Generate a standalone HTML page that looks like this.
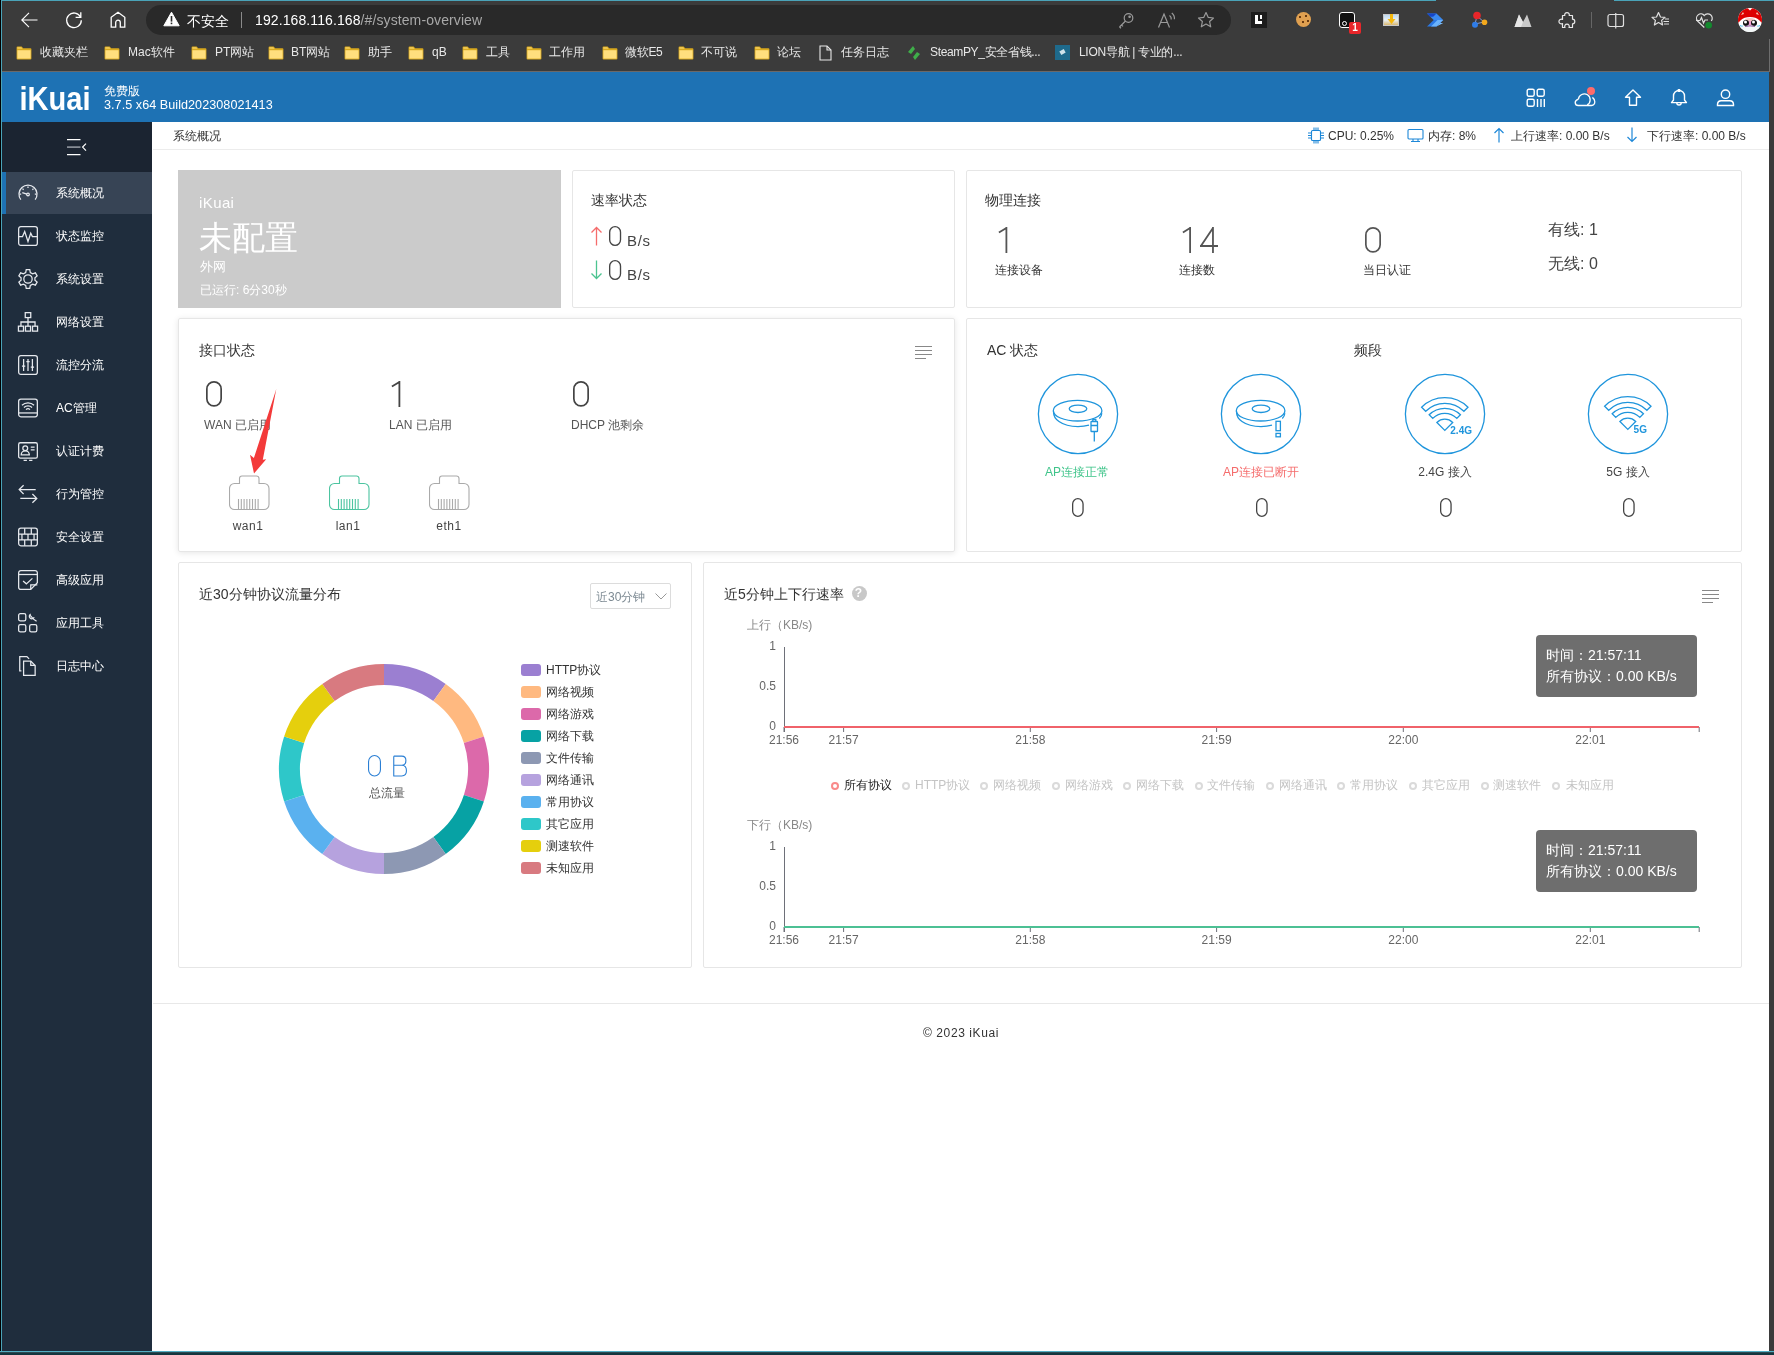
<!DOCTYPE html>
<html><head><meta charset="utf-8">
<style>
*{margin:0;padding:0;box-sizing:border-box}
html,body{width:1774px;height:1355px;overflow:hidden;background:#fff;font-family:"Liberation Sans",sans-serif}
.a{position:absolute;white-space:nowrap}
#frame{position:absolute;left:0;top:0;width:1774px;height:1355px;background:#3b3b3b;will-change:transform}
.bm{position:absolute;top:46px;font-size:12px;line-height:12px;color:#e8e8e8}
.fold{position:absolute;top:46px;width:16px;height:14px}
.side-t{position:absolute;left:56px;font-size:12px;line-height:12px;color:#fff}
.side-i{position:absolute;left:17px;width:22px;height:22px}
.card{position:absolute;border:1px solid #e6e6e6;border-radius:2px;background:#fff}
.t14{font-size:14px;line-height:14px;color:#333}
.t12{font-size:12px;line-height:12px;color:#333}
</style></head><body>
<div id="frame">
  <!-- window borders -->
  <div class="a" style="left:0;top:0;width:1774px;height:1px;background:#4aa3b8"></div><div class="a" style="left:1436px;top:0;width:178px;height:1px;background:#3b3b3b"></div>
  <div class="a" style="left:0;top:0;width:1px;height:1355px;background:#000"></div>
  <div class="a" style="left:1px;top:0;width:1px;height:1352px;background:#4aa3b8"></div>
  <div class="a" style="left:0;top:1351px;width:1774px;height:1px;background:#52aec4"></div>
  <div class="a" style="left:0;top:1352px;width:1774px;height:1px;background:#2e4a52"></div><div class="a" style="left:0;top:1353px;width:1774px;height:2px;background:#14363f"></div>

  <!-- toolbar -->
  <svg class="a" style="left:18px;top:9px" width="24" height="22" viewBox="0 0 24 22" fill="none" stroke="#fff" stroke-width="1.1">
    <path d="M19.5 11H4.2M11 3.8L3.8 11L11 18.2"/>
  </svg>
  <svg class="a" style="left:64px;top:10px" width="20" height="20" viewBox="0 0 20 20" fill="none" stroke="#fff" stroke-width="1.3">
    <path d="M16.6 7.2A7.3 7.3 0 1 0 17.3 10.2"/><path d="M16.8 2.2V7.4H11.6"/>
  </svg>
  <svg class="a" style="left:109px;top:10px" width="18" height="19" viewBox="0 0 18 19" fill="none" stroke="#fff" stroke-width="1.3">
    <path d="M2.2 17.2V7.3L9 2.2L15.8 7.3V17.2H11.3V12.5A2.3 2.3 0 0 0 6.7 12.5V17.2Z"/>
  </svg>
  <div class="a" style="left:146px;top:5px;width:1085px;height:30px;border-radius:15px;background:#292929"></div>
  <svg class="a" style="left:163px;top:11px" width="17" height="16" viewBox="0 0 17 16">
    <path d="M8.5 1.2L16.2 14.8H0.8Z" fill="#fff" stroke="#fff" stroke-width="1" stroke-linejoin="round"/>
    <rect x="7.7" y="5" width="1.6" height="5.6" fill="#292929"/><rect x="7.7" y="11.6" width="1.6" height="1.6" fill="#292929"/>
  </svg>
  <div class="a" style="left:187px;top:14px;font-size:14px;line-height:14px;color:#fff">不安全</div>
  <div class="a" style="left:241px;top:12px;width:1px;height:16px;background:#8a8a8a"></div>
  <div class="a" style="left:255px;top:13px;font-size:14px;letter-spacing:0.1px;line-height:14px;color:#fff">192.168.116.168<span style="color:#a8a8a8">/#/system-overview</span></div>
  <!-- key -->
  <svg class="a" style="left:1117px;top:12px" width="18" height="17" viewBox="0 0 18 17" fill="none" stroke="#9a9a9a" stroke-width="1.2">
    <circle cx="11.5" cy="6" r="4.3"/><path d="M8.5 9L2.5 15M2.5 15L4 16.3M4.5 13L6 14.4"/><circle cx="12.6" cy="4.8" r="0.7" fill="#9a9a9a"/>
  </svg>
  <svg class="a" style="left:1157px;top:11px" width="20" height="18" viewBox="0 0 20 18" fill="none" stroke="#9a9a9a" stroke-width="1.2">
    <path d="M1.5 16.5L7 3L12.5 16.5M3.6 11.5H10.4"/><path d="M12.5 4.5A4 4 0 0 1 14.2 8.5M14.8 2A7 7 0 0 1 17.4 8.2"/>
  </svg>
  <svg class="a" style="left:1197px;top:11px" width="18" height="18" viewBox="0 0 18 18" fill="none" stroke="#9a9a9a" stroke-width="1.2" stroke-linejoin="round">
    <path d="M9 1.5L11.3 6.4L16.5 7L12.6 10.5L13.7 15.8L9 13.1L4.3 15.8L5.4 10.5L1.5 7L6.7 6.4Z"/>
  </svg>
  <!-- extensions -->
  <div class="a" style="left:1251px;top:12px;width:16px;height:16px;background:#1c1c1c"></div>
  <div class="a" style="left:1255px;top:15px;width:3px;height:9px;background:#fff"></div>
  <div class="a" style="left:1255px;top:21px;width:7px;height:3px;background:#fff"></div>
  <div class="a" style="left:1260px;top:15px;width:2px;height:4px;background:#fff"></div>
  <div class="a" style="left:1296px;top:12px;width:15px;height:15px;border-radius:50%;background:#e0a050"></div>
  <div class="a" style="left:1299px;top:16px;width:2px;height:2px;background:#6a3a10"></div>
  <div class="a" style="left:1305px;top:15px;width:2px;height:2px;background:#6a3a10"></div>
  <div class="a" style="left:1302px;top:21px;width:2px;height:2px;background:#6a3a10"></div>
  <div class="a" style="left:1307px;top:20px;width:2px;height:2px;background:#6a3a10"></div>
  <div class="a" style="left:1339px;top:12px;width:16px;height:16px;border:1.5px solid #fff;border-radius:3px;background:#111"></div>
  <div class="a" style="left:1342px;top:21px;width:5px;height:5px;border:1.2px solid #fff;border-radius:50%"></div>
  <div class="a" style="left:1349px;top:22px;width:12px;height:12px;background:#e8262a;border-radius:2px;color:#fff;font-size:10px;line-height:12px;text-align:center;font-weight:bold">1</div>
  <div class="a" style="left:1383px;top:14px;width:16px;height:12px;background:linear-gradient(#bcd9f0 0%,#e8f0f6 50%,#d9b870 100%);border:1px solid #c8c8c8"></div>
  <svg class="a" style="left:1387px;top:14px" width="9" height="11" viewBox="0 0 9 11"><path d="M3 0H6V5H8.5L4.5 10L0.5 5H3Z" fill="#f5b80f"/></svg>
  <svg class="a" style="left:1427px;top:13px" width="17" height="14" viewBox="0 0 17 14">
<path d="M0 0.6H9.5L16.2 7H6.7Z" fill="#3b8af0"/><path d="M0 0.6H9.5L6.2 3.8H3.2Z" fill="#1646c8"/><path d="M6.7 7H16.2L9.5 13.4H0Z" fill="#2a78e6"/><path d="M9.5 13.4L13 10H16.2L9.5 13.4Z" fill="#7cc0ff"/><path d="M4 13.4L10.5 7H16.2L9.5 13.4Z" fill="#6bb2fb"/></svg>
  <svg class="a" style="left:1471px;top:11px" width="17" height="18" viewBox="0 0 17 18">
    <path d="M6 5L4 13L13 11Z" fill="none" stroke="#8a9ad0" stroke-width="1"/>
    <circle cx="6" cy="4.5" r="3.8" fill="#e8262a"/><circle cx="4" cy="13.8" r="3" fill="#2f7de8"/><circle cx="13.5" cy="11.2" r="2.8" fill="#f3a81c"/>
  </svg>
  <svg class="a" style="left:1514px;top:14px" width="18" height="13" viewBox="0 0 18 13">
    <path d="M0.5 13L5 0.5L9 8L13 0.5L17.5 13Z" fill="#c9c9c9"/><path d="M5 0.5L9 8L7 13H0.5Z" fill="#e6e6e6"/>
  </svg>
  <svg class="a" style="left:1558px;top:11px" width="18" height="19" viewBox="0 0 18 19" fill="none" stroke="#e8e8e8" stroke-width="1.2" stroke-linejoin="round">
<path d="M4.5 4.5H6.8A2.3 2.3 0 1 1 11.2 4.5H14.5V8.2A2.3 2.3 0 1 1 14.5 12.8V16.5H11A2.3 2.3 0 1 0 7 16.5H4.5V12.6A2.4 2.4 0 1 1 4.5 8.4Z"/></svg>
  <div class="a" style="left:1591px;top:12px;width:1px;height:16px;background:#666"></div>
  <svg class="a" style="left:1607px;top:13px" width="18" height="16" viewBox="0 0 18 16" fill="none" stroke="#e0e0e0" stroke-width="1.2">
    <rect x="1" y="1.5" width="15.5" height="12" rx="2"/><path d="M8.75 0V15.5"/>
  </svg>
  <svg class="a" style="left:1651px;top:11px" width="19" height="18" viewBox="0 0 19 18" fill="none" stroke="#e0e0e0" stroke-width="1.2" stroke-linejoin="round">
    <path d="M7.5 1.5L9.5 6L14 6.4L10.6 9.4L11.6 14L7.5 11.6L3.4 14L4.4 9.4L1 6.4L5.5 6Z"/><path d="M12.5 10.5H18M13 13H18M14 8H18"/>
  </svg>
  <svg class="a" style="left:1695px;top:12px" width="19" height="17" viewBox="0 0 19 17" fill="none" stroke="#e0e0e0" stroke-width="1.2">
    <path d="M9.3 15.5L2.5 9A4.2 4.2 0 0 1 9.3 3.5A4.2 4.2 0 0 1 16.3 9"/><path d="M1 8.5H5L6.5 5.5L8.5 11L10 8H13"/>
    <circle cx="13.7" cy="13.2" r="3.3" fill="#138a2e" stroke="none"/>
  </svg>
  <svg class="a" style="left:1737px;top:7px" width="26" height="26" viewBox="0 0 26 26">
<defs><clipPath id="avc"><circle cx="13" cy="13" r="12"/></clipPath></defs>
<g clip-path="url(#avc)">
<rect x="0" y="0" width="26" height="26" fill="#fff"/>
<path d="M0 0H26V17Q24 15 22 13Q19 10 13 10Q7 10 4 13Q2 15 0 17Z" fill="#dd0000"/>
<path d="M10.5 1H15.5L13 3.5Z" fill="#fff"/>
<path d="M4 8L6 5L7 7Z M22 8L20 5L19 7Z" fill="#f6c8b0"/>
<path d="M8 12Q13 10 18 12V18H8Z" fill="#f7c6c0"/>
<path d="M11.5 14H14.5V19H11.5Z" fill="#f29ad0"/>
<circle cx="9" cy="16" r="3" fill="#111"/><circle cx="17" cy="16" r="3" fill="#111"/>
<circle cx="8.5" cy="15" r="1.5" fill="#fff"/><circle cx="16.5" cy="15" r="1.5" fill="#fff"/>
<path d="M3 18Q5 19 6 18.5L6 20Q4 20 3 19Z M23 18Q21 19 20 18.5L20 20Q22 20 23 19Z" fill="#4ec4f0"/>
<path d="M3 20Q13 17 23 20V26H3Z" fill="#f4f8f8"/>
<path d="M8 19.5Q13 18.3 18 19.5" stroke="#7a3a8a" stroke-width="0.8" fill="none"/>
</g></svg>
  <!-- bookmarks bar -->
  <div class="a" style="left:2px;top:71px;width:1768px;height:1px;background:#6b6868"></div><div class="a" style="left:1769px;top:39px;width:1px;height:33px;background:#6e6e6e"></div>
</div>
<div id="bm" style="will-change:transform;position:absolute;left:0;top:0;width:1774px;height:1355px"><svg width="0" height="0" style="position:absolute"><defs><symbol id="fold" viewBox="0 0 16 14"><path d="M0.6 1.6Q0.6 0.6 1.6 0.6H5.6L7.2 2.2H14.4Q15.4 2.2 15.4 3.2V12.4Q15.4 13.4 14.4 13.4H1.6Q0.6 13.4 0.6 12.4Z" fill="#d9a91e"/><path d="M1.4 4.2H14.6V12.6H1.4Z" fill="#ffdf7e"/><path d="M1.4 1.4H5.2L6.4 2.6H1.4Z" fill="#ffdf7e"/></symbol></defs></svg><svg class="fold" style="left:16px" viewBox="0 0 16 14"><use href="#fold"/></svg><div class="bm" style="left:40px">收藏夹栏</div><svg class="fold" style="left:104px" viewBox="0 0 16 14"><use href="#fold"/></svg><div class="bm" style="left:128px">Mac软件</div><svg class="fold" style="left:191px" viewBox="0 0 16 14"><use href="#fold"/></svg><div class="bm" style="left:215px">PT网站</div><svg class="fold" style="left:268px" viewBox="0 0 16 14"><use href="#fold"/></svg><div class="bm" style="left:291px">BT网站</div><svg class="fold" style="left:344px" viewBox="0 0 16 14"><use href="#fold"/></svg><div class="bm" style="left:368px">助手</div><svg class="fold" style="left:408px" viewBox="0 0 16 14"><use href="#fold"/></svg><div class="bm" style="left:432px">qB</div><svg class="fold" style="left:462px" viewBox="0 0 16 14"><use href="#fold"/></svg><div class="bm" style="left:486px">工具</div><svg class="fold" style="left:526px" viewBox="0 0 16 14"><use href="#fold"/></svg><div class="bm" style="left:549px">工作用</div><svg class="fold" style="left:602px" viewBox="0 0 16 14"><use href="#fold"/></svg><div class="bm" style="left:625px;letter-spacing:-0.3px">微软E5</div><svg class="fold" style="left:678px" viewBox="0 0 16 14"><use href="#fold"/></svg><div class="bm" style="left:701px">不可说</div><svg class="fold" style="left:754px" viewBox="0 0 16 14"><use href="#fold"/></svg><div class="bm" style="left:777px">论坛</div><svg class="a" style="left:819px;top:45px" width="13" height="16" viewBox="0 0 13 16" fill="none" stroke="#e8e8e8" stroke-width="1.1"><path d="M1 1H8L12 5V15H1Z"/><path d="M8 1V5H12"/></svg><div class="bm" style="left:841px">任务日志</div><svg class="a" style="left:906px;top:45px" width="16" height="16" viewBox="0 0 16 16"><path d="M7 1L2 7L5 9L9 4Z" fill="#3fae49"/><path d="M9 15L14 9L11 7L7 12Z" fill="#3fae49"/></svg><div class="bm" style="left:930px;letter-spacing:-0.35px">SteamPY_安全省钱...</div><div class="a" style="left:1055px;top:45px;width:15px;height:15px;background:#1e6a8c"></div><div class="a" style="left:1060px;top:50px;width:5px;height:4px;background:#cfe3ea;transform:rotate(-30deg)"></div><div class="bm" style="left:1079px;letter-spacing:-0.3px">LION导航 | 专业的...</div></div>
<div id="page" style="will-change:transform;position:absolute;left:0;top:0;width:1774px;height:1355px"><div class="a" style="left:2px;top:72px;width:1767px;height:50px;background:#1e72b4"></div><svg class="a" style="left:20px;top:80px" width="76" height="34" viewBox="0 0 76 34"><text x="-0.5" y="30" font-family="Liberation Sans" font-weight="bold" font-size="34" fill="#fff" textLength="71" lengthAdjust="spacingAndGlyphs">iKuai</text></svg><div class="a" style="left:104px;top:85px;font-size:12px;line-height:12px;color:#fff">免费版</div><div class="a" style="left:104px;top:98.5px;font-size:12.6px;line-height:12px;color:#fff;letter-spacing:0.05px">3.7.5 x64 Build202308021413</div><svg class="a" style="left:1526px;top:88px" width="20" height="20" viewBox="0 0 20 20" fill="none" stroke="#fff" stroke-width="1.4">
<rect x="1.2" y="1.2" width="7" height="7" rx="1.6"/><rect x="11.2" y="1.2" width="7" height="7" rx="1.6"/><rect x="1.2" y="11.2" width="7" height="7" rx="1.6"/><path d="M11.5 11V19M15 11V19M18.3 11V19"/></svg><svg class="a" style="left:1570px;top:84px" width="30" height="26" viewBox="0 0 30 26" fill="none" stroke="#fff" stroke-width="1.3">
<path d="M8.4 15.2A5.9 5.9 0 1 1 17.2 20.9"/><path d="M8.4 15.2Q5.2 16.6 5.2 18.6Q5.4 21.5 8.2 21.5H21.5Q24.8 21.2 24.8 17.8Q24.6 15 22.4 13.4"/><circle cx="21" cy="6.9" r="4" fill="#ff6b6b" stroke="none"/></svg><svg class="a" style="left:1624px;top:89px" width="18" height="18" viewBox="0 0 18 18" fill="none" stroke="#fff" stroke-width="1.4" stroke-linejoin="round">
<path d="M9 1L16.5 8.3H12.5V16.3H5.5V8.3H1.5Z"/></svg><svg class="a" style="left:1670px;top:89px" width="18" height="18" viewBox="0 0 18 18" fill="none" stroke="#fff" stroke-width="1.4" stroke-linejoin="round">
<path d="M1.5 13.6H16.5L14.5 11V7A5.5 5.5 0 0 0 3.5 7V11Z"/><path d="M6.8 13.8A2.2 2.2 0 0 0 11.2 13.8"/><circle cx="9" cy="1.5" r="0.9"/></svg><svg class="a" style="left:1716px;top:89px" width="19" height="18" viewBox="0 0 19 18" fill="none" stroke="#fff" stroke-width="1.4">
<circle cx="9.5" cy="5.2" r="4.2"/><path d="M1.5 16.5V15A3.5 3.5 0 0 1 5 11.8H14A3.5 3.5 0 0 1 17.5 15V16.5Z"/></svg><div class="a" style="left:2px;top:122px;width:150px;height:1229px;background:#1f2d3d"></div><div class="a" style="left:2px;top:122px;width:150px;height:50px;background:#1b2431"></div><div class="a" style="left:2px;top:172px;width:150px;height:42px;background:#374455"></div><div class="a" style="left:2px;top:172px;width:4px;height:42px;background:#1e72b4"></div><svg class="a" style="left:66px;top:138px" width="22" height="18" viewBox="0 0 22 18" fill="none" stroke-width="1.2">
<path d="M1 1.6H14.5M1 16.6H14.5" stroke="#fff"/><path d="M1 9.1H14.5" stroke="#9aa0a8" stroke-width="1.5"/><path d="M20 5.6L16.6 9.1L20 12.6" stroke="#fff"/></svg><div class="side-t" style="top:187px">系统概况</div><div class="side-t" style="top:230px">状态监控</div><div class="side-t" style="top:273px">系统设置</div><div class="side-t" style="top:316px">网络设置</div><div class="side-t" style="top:359px">流控分流</div><div class="side-t" style="top:402px">AC管理</div><div class="side-t" style="top:445px">认证计费</div><div class="side-t" style="top:488px">行为管控</div><div class="side-t" style="top:531px">安全设置</div><div class="side-t" style="top:574px">高级应用</div><div class="side-t" style="top:617px">应用工具</div><div class="side-t" style="top:660px">日志中心</div><svg class="side-i" style="top:182px" viewBox="0 0 20 20" fill="none" stroke="#e6e9ee" stroke-width="1.15"><path d="M3.5 16A8.2 8.2 0 1 1 16.5 16"/><path d="M10 4V5.5M5 6L6 7M15 6L14 7M2.3 11H3.8M16.2 11H17.7"/><circle cx="10" cy="11.3" r="1.2"/><path d="M9 11L4.8 9.6"/></svg><svg class="side-i" style="top:225px" viewBox="0 0 20 20" fill="none" stroke="#e6e9ee" stroke-width="1.15"><rect x="1.5" y="1.5" width="17" height="17" rx="2"/><path d="M1.5 10.5H5L7 6L10 15L12.5 7.5L14 10.5H18.5"/></svg><svg class="side-i" style="top:268px" viewBox="0 0 20 20" fill="none" stroke="#e6e9ee" stroke-width="1.15"><path d="M8.4 1.5H11.6L12.1 4.1L14.2 5.3L16.7 4.4L18.3 7.2L16.3 8.9V11.1L18.3 12.8L16.7 15.6L14.2 14.7L12.1 15.9L11.6 18.5H8.4L7.9 15.9L5.8 14.7L3.3 15.6L1.7 12.8L3.7 11.1V8.9L1.7 7.2L3.3 4.4L5.8 5.3L7.9 4.1Z"/><circle cx="10" cy="10" r="3.8"/></svg><svg class="side-i" style="top:311px" viewBox="0 0 20 20" fill="none" stroke="#e6e9ee" stroke-width="1.15"><rect x="7.5" y="1.5" width="5" height="4.5"/><rect x="1.3" y="13.8" width="4.6" height="4.5"/><rect x="7.7" y="13.8" width="4.6" height="4.5"/><rect x="14.1" y="13.8" width="4.6" height="4.5"/><path d="M10 6V13.8M3.6 13.8V10H16.4V13.8"/></svg><svg class="side-i" style="top:354px" viewBox="0 0 20 20" fill="none" stroke="#e6e9ee" stroke-width="1.15"><rect x="1.5" y="1.5" width="17" height="17" rx="2"/><path d="M6 4.5V15.5M10 4.5V15.5M14 4.5V15.5"/><path d="M4.5 11H7.5M8.5 7H11.5M12.5 12H15.5"/></svg><svg class="side-i" style="top:397px" viewBox="0 0 20 20" fill="none" stroke="#e6e9ee" stroke-width="1.15"><rect x="1.5" y="2" width="17" height="16" rx="2"/><path d="M1.5 14.5H18.5"/><path d="M4.5 7.5A8 8 0 0 1 15.5 7.5M6.3 9.5A5.3 5.3 0 0 1 13.7 9.5M8.2 11.5A2.6 2.6 0 0 1 11.8 11.5"/></svg><svg class="side-i" style="top:440px" viewBox="0 0 20 20" fill="none" stroke="#e6e9ee" stroke-width="1.15"><rect x="1.5" y="2.5" width="17" height="14" rx="1.5"/><circle cx="7.5" cy="7.5" r="2.2"/><path d="M3.8 13.5A3.7 3.7 0 0 1 11.2 13.5Z"/><path d="M12.5 6.5H16M12.5 9H16M6 18.5H9M11 18.5H14"/></svg><svg class="side-i" style="top:483px" viewBox="0 0 20 20" fill="none" stroke="#e6e9ee" stroke-width="1.15"><path d="M2 6H17M6 2L2 6L6 10"/><path d="M3 14H18M14 10L18 14L14 18"/></svg><svg class="side-i" style="top:526px" viewBox="0 0 20 20" fill="none" stroke="#e6e9ee" stroke-width="1.15"><rect x="1.5" y="2" width="17" height="16" rx="2"/><path d="M1.5 7.3H18.5M1.5 12.6H18.5M7 2V7.3M13 2V7.3M4.5 7.3V12.6M10 7.3V12.6M15.5 7.3V12.6M7 12.6V18M13 12.6V18"/></svg><svg class="side-i" style="top:569px" viewBox="0 0 20 20" fill="none" stroke="#e6e9ee" stroke-width="1.15"><path d="M18.5 12.5V3.5A2 2 0 0 0 16.5 1.5H3.5A2 2 0 0 0 1.5 3.5V16.5A2 2 0 0 0 3.5 18.5H12.5Z"/><path d="M1.5 5H18.5"/><path d="M5.5 11L8.5 13.5L14 8.5"/><path d="M12.5 18.5V14.5H18.5"/></svg><svg class="side-i" style="top:612px" viewBox="0 0 20 20" fill="none" stroke="#e6e9ee" stroke-width="1.15"><rect x="1.5" y="1.5" width="6.5" height="6.5" rx="1.5"/><rect x="1.5" y="11.5" width="6.5" height="6.5" rx="1.5"/><rect x="11.5" y="11.5" width="6.5" height="6.5" rx="1.5"/><path d="M12 3L15 6.5L17.8 8.5M12.5 1.8A2.3 2.3 0 1 0 15.6 4.8"/></svg><svg class="side-i" style="top:655px" viewBox="0 0 20 20" fill="none" stroke="#e6e9ee" stroke-width="1.15"><path d="M4 14.5H2.5V1.5H9L11 3.5"/><path d="M6 5.5H12.5L16.5 9.5V18.5H6Z"/><path d="M12.5 5.5V9.5H16.5"/></svg><div class="a" style="left:152px;top:122px;width:1617px;height:1229px;background:#fff"></div><div class="a" style="left:1769px;top:122px;width:5px;height:1229px;background:#3b3b3b"></div><div class="a" style="left:153px;top:149px;width:1616px;height:1px;background:#ececec"></div><div class="a t12" style="left:173px;top:130px">系统概况</div></div><div id="cards" style="will-change:transform;position:absolute;left:0;top:0;width:1774px;height:1355px"><svg class="a" style="left:1307px;top:127px" width="18" height="17" viewBox="0 0 18 17" fill="none" stroke="#1e88d8" stroke-width="1.1">
<rect x="4.5" y="3.5" width="9" height="10" rx="1"/><path d="M1 6H4.5M1 8.5H4.5M1 11H4.5M13.5 6H17M13.5 8.5H17M13.5 11H17M7 0.5V3.5M9 0.5V3.5M11 0.5V3.5M7 13.5V16.5M9 13.5V16.5M11 13.5V16.5"/></svg><div class="a" style="left:1328px;top:130px;font-size:12px;line-height:12px;color:#333;">CPU: 0.25%</div><svg class="a" style="left:1407px;top:128px" width="17" height="15" viewBox="0 0 17 15" fill="none" stroke="#1e88d8" stroke-width="1.1">
<rect x="1" y="1.5" width="15" height="9.5" rx="1"/><path d="M4 13.5H13M6 11V13.5M11 11V13.5"/></svg><div class="a" style="left:1428px;top:130px;font-size:12px;line-height:12px;color:#333;">内存: 8%</div><svg class="a" style="left:1493px;top:127px" width="12" height="16" viewBox="0 0 12 16" fill="none" stroke="#1e88d8" stroke-width="1.2"><path d="M6 15.5V1.5M1.5 6L6 1.5L10.5 6"/></svg><div class="a" style="left:1511px;top:130px;font-size:12px;line-height:12px;color:#333;">上行速率: 0.00 B/s</div><svg class="a" style="left:1626px;top:127px" width="12" height="16" viewBox="0 0 12 16" fill="none" stroke="#1e88d8" stroke-width="1.2"><path d="M6 0.5V14.5M1.5 10L6 14.5L10.5 10"/></svg><div class="a" style="left:1647px;top:130px;font-size:12px;line-height:12px;color:#333;">下行速率: 0.00 B/s</div><div class="a" style="left:178px;top:170px;width:383px;height:138px;background:#cbcbcb"></div><div class="a" style="left:199px;top:195px;font-size:15px;line-height:15px;color:#fff;letter-spacing:0.4px">iKuai</div><div class="a" style="left:199px;top:221px;font-size:33px;line-height:33px;color:#fff;">未配置</div><div class="a" style="left:200px;top:260px;font-size:13px;line-height:13px;color:#fff;">外网</div><div class="a" style="left:200px;top:284px;font-size:12px;line-height:12px;color:#fff;">已运行: 6分30秒</div><div class="card" style="left:572px;top:170px;width:383px;height:138px;"></div><div class="a" style="left:591px;top:193px;font-size:14px;line-height:14px;color:#333;">速率状态</div><svg class="a" style="left:590px;top:226px" width="13" height="20" viewBox="0 0 13 20" fill="none" stroke="#f56c6c" stroke-width="1.3"><path d="M6.5 19.5V1.5M1.5 6.5L6.5 1.5L11.5 6.5"/></svg><svg class="a" style="left:606px;top:223px" width="18" height="26" viewBox="606 223 18 26" fill="none" stroke="#444" stroke-width="1.35" stroke-linejoin="round"><rect x="609.67" y="226.68" width="10.85" height="18.65" rx="5.42" ry="5.59"/></svg><div class="a" style="left:627px;top:233px;font-size:15px;line-height:15px;color:#444;letter-spacing:0.7px">B/s</div><svg class="a" style="left:590px;top:260px" width="13" height="20" viewBox="0 0 13 20" fill="none" stroke="#4cc490" stroke-width="1.3"><path d="M6.5 0.5V18.5M1.5 13.5L6.5 18.5L11.5 13.5"/></svg><svg class="a" style="left:606px;top:257px" width="18" height="26" viewBox="606 257 18 26" fill="none" stroke="#444" stroke-width="1.35" stroke-linejoin="round"><rect x="609.67" y="260.68" width="10.85" height="18.65" rx="5.42" ry="5.59"/></svg><div class="a" style="left:627px;top:267px;font-size:15px;line-height:15px;color:#444;letter-spacing:0.7px">B/s</div><div class="card" style="left:966px;top:170px;width:776px;height:138px;"></div><div class="a" style="left:985px;top:193px;font-size:14px;line-height:14px;color:#333;">物理连接</div><svg class="a" style="left:994.8px;top:224px" width="15" height="32" viewBox="994.8 224 15 32" fill="none" stroke="#555" stroke-width="1.8" stroke-linejoin="round"><path d="M1006.20 227.00V253.00M998.70 232.46L1006.20 227.90"/></svg><svg class="a" style="left:1179px;top:224px" width="42" height="32" viewBox="1179 224 42 32" fill="none" stroke="#555" stroke-width="1.8" stroke-linejoin="round"><path d="M1190.10 227.00V253.00M1182.90 232.46L1190.10 227.90"/><path d="M1212.96 227.00V253.00M1212.96 227.90L1200.90 245.98M1200.00 245.98H1218.00"/></svg><svg class="a" style="left:1362px;top:224px" width="22" height="32" viewBox="1362 224 22 32" fill="none" stroke="#555" stroke-width="1.7" stroke-linejoin="round"><rect x="1365.85" y="227.85" width="14.30" height="24.10" rx="7.15" ry="7.23"/></svg><div class="a" style="left:995px;top:264px;font-size:12px;line-height:12px;color:#333;">连接设备</div><div class="a" style="left:1179px;top:264px;font-size:12px;line-height:12px;color:#333;">连接数</div><div class="a" style="left:1363px;top:264px;font-size:12px;line-height:12px;color:#333;">当日认证</div><div class="a" style="left:1548px;top:222px;font-size:16px;line-height:16px;color:#444;">有线: 1</div><div class="a" style="left:1548px;top:256px;font-size:16px;line-height:16px;color:#444;">无线: 0</div><div class="card" style="left:178px;top:318px;width:777px;height:234px;box-shadow:0 1px 6px rgba(0,0,0,0.10)"></div><div class="a" style="left:199px;top:343px;font-size:14px;line-height:14px;color:#333;">接口状态</div><svg class="a" style="left:914px;top:345px" width="19" height="15" viewBox="0 0 19 15" fill="none" stroke="#888" stroke-width="1"><path d="M1 1.5H18M1 5.5H18M1 9.5H18M1 13.5H12"/></svg><svg class="a" style="left:203px;top:378px" width="22" height="32" viewBox="203 378 22 32" fill="none" stroke="#444" stroke-width="1.7" stroke-linejoin="round"><rect x="206.85" y="381.85" width="14.30" height="24.10" rx="7.15" ry="7.23"/></svg><svg class="a" style="left:387.5px;top:378px" width="15" height="32" viewBox="387.5 378 15 32" fill="none" stroke="#444" stroke-width="1.8" stroke-linejoin="round"><path d="M398.90 381.00V407.00M391.40 386.46L398.90 381.90"/></svg><svg class="a" style="left:569.5px;top:378px" width="22" height="32" viewBox="569.5 378 22 32" fill="none" stroke="#444" stroke-width="1.7" stroke-linejoin="round"><rect x="573.35" y="381.85" width="14.30" height="24.10" rx="7.15" ry="7.23"/></svg><div class="a" style="left:204px;top:419px;font-size:12px;line-height:12px;color:#555;">WAN 已启用</div><div class="a" style="left:389px;top:419px;font-size:12px;line-height:12px;color:#555;">LAN 已启用</div><div class="a" style="left:571px;top:419px;font-size:12px;line-height:12px;color:#555;">DHCP 池剩余</div><svg class="a" style="left:228.5px;top:475px" width="41" height="36" viewBox="0 0 41 36" fill="none" stroke="#aaa" stroke-width="1.1">
<path d="M10.5 8.5V3.5A2.5 2.5 0 0 1 13 1H27.5A2.5 2.5 0 0 1 30 3.5V8.5H35A5 5 0 0 1 40 13.5V29.5A5 5 0 0 1 35 34.5H5.5A5 5 0 0 1 0.5 29.5V13.5A5 5 0 0 1 5.5 8.5Z"/>
<path d="M9.5 24V34.5M12.3 24V34.5M15.1 24V34.5M17.9 24V34.5M20.7 24V34.5M23.5 24V34.5M26.3 24V34.5M29.1 24V34.5"/></svg><svg class="a" style="left:328.5px;top:475px" width="41" height="36" viewBox="0 0 41 36" fill="none" stroke="#4cc4a0" stroke-width="1.1">
<path d="M10.5 8.5V3.5A2.5 2.5 0 0 1 13 1H27.5A2.5 2.5 0 0 1 30 3.5V8.5H35A5 5 0 0 1 40 13.5V29.5A5 5 0 0 1 35 34.5H5.5A5 5 0 0 1 0.5 29.5V13.5A5 5 0 0 1 5.5 8.5Z"/>
<path d="M9.5 24V34.5M12.3 24V34.5M15.1 24V34.5M17.9 24V34.5M20.7 24V34.5M23.5 24V34.5M26.3 24V34.5M29.1 24V34.5"/></svg><svg class="a" style="left:428.5px;top:475px" width="41" height="36" viewBox="0 0 41 36" fill="none" stroke="#aaa" stroke-width="1.1">
<path d="M10.5 8.5V3.5A2.5 2.5 0 0 1 13 1H27.5A2.5 2.5 0 0 1 30 3.5V8.5H35A5 5 0 0 1 40 13.5V29.5A5 5 0 0 1 35 34.5H5.5A5 5 0 0 1 0.5 29.5V13.5A5 5 0 0 1 5.5 8.5Z"/>
<path d="M9.5 24V34.5M12.3 24V34.5M15.1 24V34.5M17.9 24V34.5M20.7 24V34.5M23.5 24V34.5M26.3 24V34.5M29.1 24V34.5"/></svg><div class="a" style="left:148px;width:200px;text-align:center;top:520px;font-size:12px;line-height:12px;color:#444;letter-spacing:0.5px">wan1</div><div class="a" style="left:248px;width:200px;text-align:center;top:520px;font-size:12px;line-height:12px;color:#444;letter-spacing:0.5px">lan1</div><div class="a" style="left:349px;width:200px;text-align:center;top:520px;font-size:12px;line-height:12px;color:#444;letter-spacing:0.5px">eth1</div><svg class="a" style="left:240px;top:380px" width="45" height="100" viewBox="240 380 45 100"><path d="M276.3 389L262.8 459.8L266.2 459.3L254 473.6L250 454.8L253.9 457.9Z" fill="#f33a3a"/></svg><div class="card" style="left:966px;top:318px;width:776px;height:234px;"></div><div class="a" style="left:987px;top:343px;font-size:14px;line-height:14px;color:#333;">AC 状态</div><div class="a" style="left:1354px;top:343px;font-size:14px;line-height:14px;color:#333;">频段</div><svg class="a" style="left:1028px;top:364px" width="100" height="100" viewBox="0 0 100 100" fill="none" stroke="#1f95dc" stroke-width="1.3"><circle cx="50" cy="50" r="39.6"/><ellipse cx="49.6" cy="46.7" rx="24.3" ry="10.3"/><ellipse cx="50" cy="44.8" rx="8.8" ry="3.7"/><path d="M25.5 47.5Q25.5 54 31 57.5Q38 62.5 50 62.6Q56 62.6 61 61.2"/><path d="M71.3 54.5Q73.6 52.3 73.8 49.2"/><rect x="63" y="57.5" width="6.5" height="10" rx="0.6"/><path d="M63 61.5H69.5M64.8 57.5V55.5H67.8V57.5M66.3 67.5V77.5"/></svg><svg class="a" style="left:1211px;top:364px" width="100" height="100" viewBox="0 0 100 100" fill="none" stroke="#1f95dc" stroke-width="1.3"><circle cx="50" cy="50" r="39.6"/><ellipse cx="49.6" cy="46.7" rx="24.3" ry="10.3"/><ellipse cx="50" cy="44.8" rx="8.8" ry="3.7"/><path d="M25.5 47.5Q25.5 54 31 57.5Q38 62.5 50 62.6Q56 62.6 61 61.2"/><path d="M71.3 54.5Q73.6 52.3 73.8 49.2"/><rect x="65" y="57.3" width="4.4" height="9.4"/><rect x="65" y="69.4" width="4.4" height="3.4"/></svg><svg class="a" style="left:1395px;top:364px" width="100" height="100" viewBox="0 0 100 100" fill="none" stroke="#1f95dc" stroke-width="1.3"><circle cx="50" cy="50" r="39.6"/><path d="M26.61 43.21A32.8 32.8 0 0 1 72.99 43.21L68.89 47.31A27 27 0 0 0 30.71 47.31Z"/><path d="M34.17 50.77A22.1 22.1 0 0 1 65.43 50.77L61.82 54.38A17 17 0 0 0 37.78 54.38Z"/><path d="M49.8 66.4L41.88 58.48A11.2 11.2 0 0 1 57.72 58.48Z"/><text x="55.3" y="69.6" fill="#1f95dc" stroke="none" font-family="Liberation Sans" font-size="10" font-weight="bold">2.4G</text></svg><svg class="a" style="left:1578px;top:364px" width="100" height="100" viewBox="0 0 100 100" fill="none" stroke="#1f95dc" stroke-width="1.3"><circle cx="50" cy="50" r="39.6"/><path d="M26.61 42.21A32.8 32.8 0 0 1 72.99 42.21L68.89 46.31A27 27 0 0 0 30.71 46.31Z"/><path d="M34.17 49.77A22.1 22.1 0 0 1 65.43 49.77L61.82 53.38A17 17 0 0 0 37.78 53.38Z"/><path d="M49.8 65.4L41.88 57.48A11.2 11.2 0 0 1 57.72 57.48Z"/><text x="55.6" y="68.6" fill="#1f95dc" stroke="none" font-family="Liberation Sans" font-size="10" font-weight="bold">5G</text></svg><div class="a" style="left:977px;width:200px;text-align:center;top:466px;font-size:12px;line-height:12px;color:#3fc48a;">AP连接正常</div><svg class="a" style="left:1068.5px;top:494.5px" width="18" height="25" viewBox="1068.5 494.5 18 25" fill="none" stroke="#444" stroke-width="1.3" stroke-linejoin="round"><rect x="1072.15" y="498.15" width="10.40" height="17.70" rx="5.20" ry="5.31"/></svg><div class="a" style="left:1161px;width:200px;text-align:center;top:466px;font-size:12px;line-height:12px;color:#f56c6c;">AP连接已断开</div><svg class="a" style="left:1252.5px;top:494.5px" width="18" height="25" viewBox="1252.5 494.5 18 25" fill="none" stroke="#444" stroke-width="1.3" stroke-linejoin="round"><rect x="1256.15" y="498.15" width="10.40" height="17.70" rx="5.20" ry="5.31"/></svg><div class="a" style="left:1345px;width:200px;text-align:center;top:466px;font-size:12px;line-height:12px;color:#444;">2.4G 接入</div><svg class="a" style="left:1436.5px;top:494.5px" width="18" height="25" viewBox="1436.5 494.5 18 25" fill="none" stroke="#444" stroke-width="1.3" stroke-linejoin="round"><rect x="1440.15" y="498.15" width="10.40" height="17.70" rx="5.20" ry="5.31"/></svg><div class="a" style="left:1528px;width:200px;text-align:center;top:466px;font-size:12px;line-height:12px;color:#444;">5G 接入</div><svg class="a" style="left:1619.5px;top:494.5px" width="18" height="25" viewBox="1619.5 494.5 18 25" fill="none" stroke="#444" stroke-width="1.3" stroke-linejoin="round"><rect x="1623.15" y="498.15" width="10.40" height="17.70" rx="5.20" ry="5.31"/></svg><div class="card" style="left:178px;top:562px;width:514px;height:406px;"></div><div class="a" style="left:199px;top:587px;font-size:14px;line-height:14px;color:#333;">近30分钟协议流量分布</div><div class="a" style="left:590px;top:583px;width:81px;height:26px;border:1px solid #dcdcdc;border-radius:2px"></div><div class="a" style="left:596px;top:591px;font-size:12px;line-height:12px;color:#7d8a93;">近30分钟</div><svg class="a" style="left:654px;top:591px" width="14" height="10" viewBox="0 0 14 10" fill="none" stroke="#999" stroke-width="1"><path d="M1.5 2.5L7 8L12.5 2.5"/></svg><svg class="a" style="left:274px;top:659px" width="220" height="220" viewBox="274 659 220 220"><path d="M384.00 664.00A105 105 0 0 1 445.72 684.05L433.37 701.04A84 84 0 0 0 384.00 685.00Z" fill="#9b7fd1"/><path d="M445.72 684.05A105 105 0 0 1 483.86 736.55L463.89 743.04A84 84 0 0 0 433.37 701.04Z" fill="#ffb980"/><path d="M483.86 736.55A105 105 0 0 1 483.86 801.45L463.89 794.96A84 84 0 0 0 463.89 743.04Z" fill="#dc69aa"/><path d="M483.86 801.45A105 105 0 0 1 445.72 853.95L433.37 836.96A84 84 0 0 0 463.89 794.96Z" fill="#07a2a4"/><path d="M445.72 853.95A105 105 0 0 1 384.00 874.00L384.00 853.00A84 84 0 0 0 433.37 836.96Z" fill="#8d98b3"/><path d="M384.00 874.00A105 105 0 0 1 322.28 853.95L334.63 836.96A84 84 0 0 0 384.00 853.00Z" fill="#b6a2de"/><path d="M322.28 853.95A105 105 0 0 1 284.14 801.45L304.11 794.96A84 84 0 0 0 334.63 836.96Z" fill="#5ab1ef"/><path d="M284.14 801.45A105 105 0 0 1 284.14 736.55L304.11 743.04A84 84 0 0 0 304.11 794.96Z" fill="#2ec7c9"/><path d="M284.14 736.55A105 105 0 0 1 322.28 684.05L334.63 701.04A84 84 0 0 0 304.11 743.04Z" fill="#e5cf0d"/><path d="M322.28 684.05A105 105 0 0 1 384.00 664.00L384.00 685.00A84 84 0 0 0 334.63 701.04Z" fill="#d87a80"/></svg><svg class="a" style="left:364.9px;top:752.3px" width="45" height="28" viewBox="364.9 752.3 45 28" fill="none" stroke="#2a7fd4" stroke-width="1.1" stroke-linejoin="round"><rect x="368.45" y="755.85" width="11.90" height="20.40" rx="5.95" ry="6.12"/><path d="M393.65 756.45H401.66Q405.80 756.45 405.80 760.71Q405.80 765.51 401.66 765.51H393.65M401.66 765.51Q406.35 765.51 406.35 771.16Q406.35 776.25 401.66 776.25H393.65V756.45"/></svg><div class="a" style="left:287px;width:200px;text-align:center;top:787px;font-size:12px;line-height:12px;color:#555;">总流量</div><div class="a" style="left:521px;top:664px;width:20px;height:12px;border-radius:3px;background:#9b7fd1"></div><div class="a" style="left:546px;top:664px;font-size:12px;line-height:12px;color:#333;">HTTP协议</div><div class="a" style="left:521px;top:686px;width:20px;height:12px;border-radius:3px;background:#ffb980"></div><div class="a" style="left:546px;top:686px;font-size:12px;line-height:12px;color:#333;">网络视频</div><div class="a" style="left:521px;top:708px;width:20px;height:12px;border-radius:3px;background:#dc69aa"></div><div class="a" style="left:546px;top:708px;font-size:12px;line-height:12px;color:#333;">网络游戏</div><div class="a" style="left:521px;top:730px;width:20px;height:12px;border-radius:3px;background:#07a2a4"></div><div class="a" style="left:546px;top:730px;font-size:12px;line-height:12px;color:#333;">网络下载</div><div class="a" style="left:521px;top:752px;width:20px;height:12px;border-radius:3px;background:#8d98b3"></div><div class="a" style="left:546px;top:752px;font-size:12px;line-height:12px;color:#333;">文件传输</div><div class="a" style="left:521px;top:774px;width:20px;height:12px;border-radius:3px;background:#b6a2de"></div><div class="a" style="left:546px;top:774px;font-size:12px;line-height:12px;color:#333;">网络通讯</div><div class="a" style="left:521px;top:796px;width:20px;height:12px;border-radius:3px;background:#5ab1ef"></div><div class="a" style="left:546px;top:796px;font-size:12px;line-height:12px;color:#333;">常用协议</div><div class="a" style="left:521px;top:818px;width:20px;height:12px;border-radius:3px;background:#2ec7c9"></div><div class="a" style="left:546px;top:818px;font-size:12px;line-height:12px;color:#333;">其它应用</div><div class="a" style="left:521px;top:840px;width:20px;height:12px;border-radius:3px;background:#e5cf0d"></div><div class="a" style="left:546px;top:840px;font-size:12px;line-height:12px;color:#333;">测速软件</div><div class="a" style="left:521px;top:862px;width:20px;height:12px;border-radius:3px;background:#d87a80"></div><div class="a" style="left:546px;top:862px;font-size:12px;line-height:12px;color:#333;">未知应用</div><div class="card" style="left:703px;top:562px;width:1039px;height:406px;"></div><div class="a" style="left:724px;top:587px;font-size:14px;line-height:14px;color:#333;">近5分钟上下行速率</div><div class="a" style="left:852px;top:586px;width:15px;height:15px;border-radius:50%;background:#c8c8c8;color:#fff;font-size:12px;line-height:15px;text-align:center;font-weight:bold;text-indent:-2px">?</div><svg class="a" style="left:1701px;top:589px" width="19" height="15" viewBox="0 0 19 15" fill="none" stroke="#888" stroke-width="1"><path d="M1 1.5H18M1 5.5H18M1 9.5H18M1 13.5H12"/></svg><div class="a" style="left:747px;top:619px;font-size:12px;line-height:12px;color:#888;">上行（KB/s)</div><div class="a" style="left:700px;width:76px;text-align:right;top:640px;font-size:12px;line-height:12px;color:#666">1</div><div class="a" style="left:700px;width:76px;text-align:right;top:680px;font-size:12px;line-height:12px;color:#666">0.5</div><div class="a" style="left:700px;width:76px;text-align:right;top:720px;font-size:12px;line-height:12px;color:#666">0</div><svg class="a" style="left:780px;top:640px" width="925" height="100" viewBox="780 640 925 100"><path d="M784.5 647V732" stroke="#6e7079" stroke-width="1"/><path d="M784.0 727V732" stroke="#6e7079" stroke-width="1"/><path d="M843.6 727V732" stroke="#6e7079" stroke-width="1"/><path d="M1030.3 727V732" stroke="#6e7079" stroke-width="1"/><path d="M1216.6 727V732" stroke="#6e7079" stroke-width="1"/><path d="M1403.3 727V732" stroke="#6e7079" stroke-width="1"/><path d="M1590.3 727V732" stroke="#6e7079" stroke-width="1"/><path d="M1699.2 727V732" stroke="#6e7079" stroke-width="1"/><path d="M784 727H1699" stroke="#f0626a" stroke-width="2"/></svg><div class="a" style="left:744.0px;width:80px;text-align:center;top:734px;font-size:12px;line-height:12px;color:#666">21:56</div><div class="a" style="left:803.6px;width:80px;text-align:center;top:734px;font-size:12px;line-height:12px;color:#666">21:57</div><div class="a" style="left:990.3px;width:80px;text-align:center;top:734px;font-size:12px;line-height:12px;color:#666">21:58</div><div class="a" style="left:1176.6px;width:80px;text-align:center;top:734px;font-size:12px;line-height:12px;color:#666">21:59</div><div class="a" style="left:1363.3px;width:80px;text-align:center;top:734px;font-size:12px;line-height:12px;color:#666">22:00</div><div class="a" style="left:1550.3px;width:80px;text-align:center;top:734px;font-size:12px;line-height:12px;color:#666">22:01</div><div class="a" style="left:1536px;top:635px;width:161px;height:62px;border-radius:4px;background:#6e6e6e"></div><div class="a" style="left:1546px;top:648px;font-size:14px;line-height:14px;color:#fff;">时间：21:57:11</div><div class="a" style="left:1546px;top:669px;font-size:14px;line-height:14px;color:#fff;">所有协议：0.00 KB/s</div><div class="a" style="left:747px;top:819px;font-size:12px;line-height:12px;color:#888;">下行（KB/s)</div><div class="a" style="left:700px;width:76px;text-align:right;top:840px;font-size:12px;line-height:12px;color:#666">1</div><div class="a" style="left:700px;width:76px;text-align:right;top:880px;font-size:12px;line-height:12px;color:#666">0.5</div><div class="a" style="left:700px;width:76px;text-align:right;top:920px;font-size:12px;line-height:12px;color:#666">0</div><svg class="a" style="left:780px;top:840px" width="925" height="100" viewBox="780 640 925 100"><path d="M784.5 647V732" stroke="#6e7079" stroke-width="1"/><path d="M784.0 727V732" stroke="#6e7079" stroke-width="1"/><path d="M843.6 727V732" stroke="#6e7079" stroke-width="1"/><path d="M1030.3 727V732" stroke="#6e7079" stroke-width="1"/><path d="M1216.6 727V732" stroke="#6e7079" stroke-width="1"/><path d="M1403.3 727V732" stroke="#6e7079" stroke-width="1"/><path d="M1590.3 727V732" stroke="#6e7079" stroke-width="1"/><path d="M1699.2 727V732" stroke="#6e7079" stroke-width="1"/><path d="M784 727H1699" stroke="#4cc094" stroke-width="2"/></svg><div class="a" style="left:744.0px;width:80px;text-align:center;top:934px;font-size:12px;line-height:12px;color:#666">21:56</div><div class="a" style="left:803.6px;width:80px;text-align:center;top:934px;font-size:12px;line-height:12px;color:#666">21:57</div><div class="a" style="left:990.3px;width:80px;text-align:center;top:934px;font-size:12px;line-height:12px;color:#666">21:58</div><div class="a" style="left:1176.6px;width:80px;text-align:center;top:934px;font-size:12px;line-height:12px;color:#666">21:59</div><div class="a" style="left:1363.3px;width:80px;text-align:center;top:934px;font-size:12px;line-height:12px;color:#666">22:00</div><div class="a" style="left:1550.3px;width:80px;text-align:center;top:934px;font-size:12px;line-height:12px;color:#666">22:01</div><div class="a" style="left:1536px;top:830px;width:161px;height:62px;border-radius:4px;background:#6e6e6e"></div><div class="a" style="left:1546px;top:843px;font-size:14px;line-height:14px;color:#fff;">时间：21:57:11</div><div class="a" style="left:1546px;top:864px;font-size:14px;line-height:14px;color:#fff;">所有协议：0.00 KB/s</div><div class="a" style="left:831px;top:782px;width:8px;height:8px;border-radius:50%;border:2px solid #f98a8a"></div><div class="a" style="left:844px;top:779px;font-size:12px;line-height:12px;color:#222;">所有协议</div><div class="a" style="left:902.4px;top:782px;width:8px;height:8px;border-radius:50%;border:2px solid #dadada"></div><div class="a" style="left:915px;top:779px;font-size:12px;line-height:12px;color:#c4c4c4;">HTTP协议</div><div class="a" style="left:980.0px;top:782px;width:8px;height:8px;border-radius:50%;border:2px solid #dadada"></div><div class="a" style="left:993px;top:779px;font-size:12px;line-height:12px;color:#c4c4c4;">网络视频</div><div class="a" style="left:1051.6px;top:782px;width:8px;height:8px;border-radius:50%;border:2px solid #dadada"></div><div class="a" style="left:1065px;top:779px;font-size:12px;line-height:12px;color:#c4c4c4;">网络游戏</div><div class="a" style="left:1123.0px;top:782px;width:8px;height:8px;border-radius:50%;border:2px solid #dadada"></div><div class="a" style="left:1136px;top:779px;font-size:12px;line-height:12px;color:#c4c4c4;">网络下载</div><div class="a" style="left:1194.7px;top:782px;width:8px;height:8px;border-radius:50%;border:2px solid #dadada"></div><div class="a" style="left:1207px;top:779px;font-size:12px;line-height:12px;color:#c4c4c4;">文件传输</div><div class="a" style="left:1266.2px;top:782px;width:8px;height:8px;border-radius:50%;border:2px solid #dadada"></div><div class="a" style="left:1279px;top:779px;font-size:12px;line-height:12px;color:#c4c4c4;">网络通讯</div><div class="a" style="left:1337.3px;top:782px;width:8px;height:8px;border-radius:50%;border:2px solid #dadada"></div><div class="a" style="left:1350px;top:779px;font-size:12px;line-height:12px;color:#c4c4c4;">常用协议</div><div class="a" style="left:1409.4px;top:782px;width:8px;height:8px;border-radius:50%;border:2px solid #dadada"></div><div class="a" style="left:1422px;top:779px;font-size:12px;line-height:12px;color:#c4c4c4;">其它应用</div><div class="a" style="left:1480.8px;top:782px;width:8px;height:8px;border-radius:50%;border:2px solid #dadada"></div><div class="a" style="left:1493px;top:779px;font-size:12px;line-height:12px;color:#c4c4c4;">测速软件</div><div class="a" style="left:1552.0px;top:782px;width:8px;height:8px;border-radius:50%;border:2px solid #dadada"></div><div class="a" style="left:1566px;top:779px;font-size:12px;line-height:12px;color:#c4c4c4;">未知应用</div><div class="a" style="left:153px;top:1003px;width:1616px;height:1px;background:#e8e8e8"></div><div class="a" style="left:861px;width:200px;text-align:center;top:1027px;font-size:12px;line-height:12px;color:#333;letter-spacing:0.6px">© 2023 iKuai</div></div><!--endcards-->
</body></html>
